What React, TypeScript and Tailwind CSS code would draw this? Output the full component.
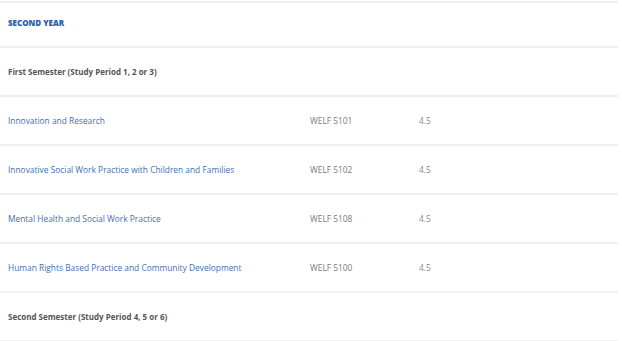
import React from "react";

type Course = { title: string; code: string; units: string };

const courses: Course[] = [
  { title: "Innovation and Research", code: "WELF 5101", units: "4.5" },
  { title: "Innovative Social Work Practice with Children and Families", code: "WELF 5102", units: "4.5" },
  { title: "Mental Health and Social Work Practice", code: "WELF 5108", units: "4.5" },
  { title: "Human Rights Based Practice and Community Development", code: "WELF 5100", units: "4.5" },
];

const font = { fontFamily: '"Open Sans", "Noto Sans", sans-serif' };

function SemesterRow({ label }: { label: string }) {
  return (
    <div className="h-[49px] flex items-center pl-[8px] border-b-2 border-[#f0f0f0]">
      <span className="text-[8px] font-bold text-[#555]">{label}</span>
    </div>
  );
}

export default function App() {
  return (
    <div className="w-[622px] h-[341px] bg-white overflow-hidden pt-[1px]" style={font}>
      <div className="w-[618px] border-t-2 border-[#f0f0f0]">
        <div className="h-[45px] flex items-center pl-[8px] pb-[4px] border-b-2 border-[#f0f0f0]">
          <span className="text-[8px] font-extrabold text-[#2b5ea7] uppercase">Second Year</span>
        </div>
        <SemesterRow label="First Semester (Study Period 1, 2 or 3)" />
        {courses.map((c) => (
          <div key={c.code} className="h-[49px] flex items-center border-b-2 border-[#f0f0f0]">
            <span className="w-[310px] pl-[8px] text-[8.4px] leading-[12px] text-[#3f6fb3]">{c.title}</span>
            <span className="w-[109px] text-[8.4px] leading-[12px] text-[#7a7a7a]">{c.code}</span>
            <span className="text-[8.4px] leading-[12px] text-[#8a8a8a]">{c.units}</span>
          </div>
        ))}
        <SemesterRow label="Second Semester (Study Period 4, 5 or 6)" />
      </div>
    </div>
  );
}
